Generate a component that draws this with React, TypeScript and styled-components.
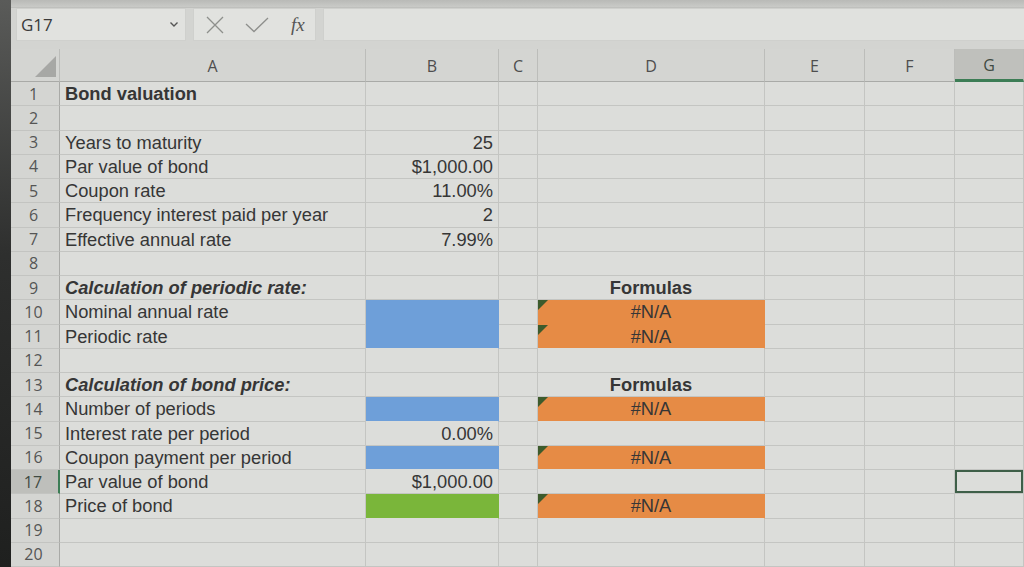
import React from "react";
import styled, { createGlobalStyle } from "styled-components";

const Global = createGlobalStyle`
  html, body { margin: 0; padding: 0; background: #d7d8d5; overflow: hidden; }
  #root { width: 1024px; height: 567px; }
`;

const Screen = styled.div`
  width: 1024px;
  height: 567px;
  display: flex;
  overflow: hidden;
  background: #d9dad7;
`;

const Bezel = styled.div`
  width: 11px;
  flex: none;
  background: linear-gradient(to bottom, #5a5b59 0%, #2e2f2e 45%, #1f201f 100%);
`;

const Main = styled.div`
  flex: 1;
  display: flex;
  flex-direction: column;
  min-width: 0;
`;

const TopStrip = styled.div`
  height: 7px;
  background: linear-gradient(to bottom, #b9bab7, #c9cac7);
  border-bottom: 1px solid #bfc0bd;
`;

const FormulaBar = styled.div`
  height: 33px;
  display: flex;
  gap: 7px;
  padding-left: 5px;
  background: #d3d4d1;
`;

const NameBox = styled.div`
  width: 170px;
  display: flex;
  align-items: center;
  justify-content: space-between;
  padding: 0 6px 0 4px;
  box-sizing: border-box;
  background: #e1e2df;
  border: 1px solid #cfd0cd;
  font-family: "Open Sans", "Noto Sans", sans-serif;
  font-size: 17px;
  color: #3a3a3a;
`;

const FnBox = styled.div`
  width: 123px;
  display: flex;
  align-items: center;
  gap: 20px;
  padding-left: 11px;
  box-sizing: border-box;
  background: #e1e2df;
  border: 1px solid #cfd0cd;
`;

const Fx = styled.span`
  font-family: "Liberation Serif", serif;
  font-style: italic;
  font-size: 19px;
  color: #555;
  margin-left: 2px;
`;

const FormulaInput = styled.div`
  flex: 1;
  background: #e0e1de;
  border: 1px solid #cfd0cd;
  border-right: none;
`;

const Spacer = styled.div`
  height: 8px;
  background: #d3d4d1;
`;

const Sheet = styled.div`
  display: grid;
  grid-template-columns: 49px 306px 133px 39px 227px 100px 90px 1fr;
  grid-template-rows: 33px repeat(20, 24.25px);
  flex: 1;
  background: #dcddda;
`;

const ColHead = styled.div<{ $sel?: boolean }>`
  display: flex;
  align-items: center;
  justify-content: center;
  padding-top: 2px;
  box-sizing: border-box;
  font-family: "Open Sans", "Noto Sans", sans-serif;
  font-size: 16px;
  color: ${(p) => (p.$sel ? "#3f4a42" : "#4e4e4e")};
  background: ${(p) => (p.$sel ? "#bfc0bc" : "#d4d5d2")};
  border-right: 1px solid #bcbdba;
  border-bottom: ${(p) => (p.$sel ? "3px solid #3c7d55" : "1px solid #a9aaa7")};
`;

const Corner = styled.div`
  display: flex;
  align-items: flex-end;
  justify-content: flex-end;
  padding: 0 3px 4px 0;
  background: #d4d5d2;
  border-right: 1px solid #bcbdba;
  border-bottom: 1px solid #a9aaa7;
`;

const RowHead = styled.div<{ $sel?: boolean }>`
  display: flex;
  align-items: center;
  justify-content: center;
  padding-right: 3px;
  box-sizing: border-box;
  font-family: "Open Sans", "Noto Sans", sans-serif;
  font-size: 16px;
  color: ${(p) => (p.$sel ? "#3f4a42" : "#555")};
  background: ${(p) => (p.$sel ? "#bebfbb" : "#d4d5d2")};
  border-right: ${(p) => (p.$sel ? "2px solid #3c7d55" : "1px solid #a9aaa7")};
  border-bottom: 1px solid #c3c4c1;
`;

type Fill = "blue" | "orange" | "green" | undefined;

const fillColor: Record<string, string> = {
  blue: "#6e9fd9",
  orange: "#e68b45",
  green: "#7ab63a",
};

const Cell = styled.div<{
  $align?: "left" | "right" | "center";
  $bold?: boolean;
  $italic?: boolean;
  $fill?: Fill;
  $joinBelow?: boolean;
  $selected?: boolean;
}>`
  position: relative;
  display: flex;
  align-items: center;
  justify-content: ${(p) =>
    p.$align === "right" ? "flex-end" : p.$align === "center" ? "center" : "flex-start"};
  padding: 1px 5px 0 5px;
  box-sizing: border-box;
  white-space: nowrap;
  font-family: "Liberation Sans", Arial, sans-serif;
  font-size: 18.3px;
  font-weight: ${(p) => (p.$bold ? 700 : 400)};
  font-style: ${(p) => (p.$italic ? "italic" : "normal")};
  color: #363636;
  background: ${(p) => (p.$fill ? fillColor[p.$fill] : "#dcddda")};
  border-right: 1px solid ${(p) => (p.$fill ? fillColor[p.$fill] : "#c4c5c2")};
  border-bottom: 1px solid
    ${(p) => (p.$fill && p.$joinBelow ? fillColor[p.$fill] : p.$fill ? "#dcddda" : "#c4c5c2")};
  box-shadow: ${(p) => (p.$selected ? "inset 0 0 0 2px #3e5f48" : "none")};
  overflow: visible;
`;

const ErrMark = styled.span`
  position: absolute;
  left: 0;
  top: 0;
  width: 0;
  height: 0;
  border-top: 10px solid #3d5b2c;
  border-right: 10px solid transparent;
`;

type CellDef = {
  text?: string;
  align?: "left" | "right" | "center";
  bold?: boolean;
  italic?: boolean;
  fill?: Fill;
  joinBelow?: boolean;
  err?: boolean;
};

const rows: Record<number, Record<string, CellDef>> = {
  1: { A: { text: "Bond valuation", bold: true } },
  3: { A: { text: "Years to maturity" }, B: { text: "25", align: "right" } },
  4: { A: { text: "Par value of bond" }, B: { text: "$1,000.00", align: "right" } },
  5: { A: { text: "Coupon rate" }, B: { text: "11.00%", align: "right" } },
  6: { A: { text: "Frequency interest paid per year" }, B: { text: "2", align: "right" } },
  7: { A: { text: "Effective annual rate" }, B: { text: "7.99%", align: "right" } },
  9: {
    A: { text: "Calculation of periodic rate:", bold: true, italic: true },
    D: { text: "Formulas", bold: true, align: "center" },
  },
  10: {
    A: { text: "Nominal annual rate" },
    B: { fill: "blue", joinBelow: true },
    D: { text: "#N/A", align: "center", fill: "orange", joinBelow: true, err: true },
  },
  11: {
    A: { text: "Periodic rate" },
    B: { fill: "blue" },
    D: { text: "#N/A", align: "center", fill: "orange", err: true },
  },
  13: {
    A: { text: "Calculation of bond price:", bold: true, italic: true },
    D: { text: "Formulas", bold: true, align: "center" },
  },
  14: {
    A: { text: "Number of periods" },
    B: { fill: "blue" },
    D: { text: "#N/A", align: "center", fill: "orange", err: true },
  },
  15: { A: { text: "Interest rate per period" }, B: { text: "0.00%", align: "right" } },
  16: {
    A: { text: "Coupon payment per period" },
    B: { fill: "blue" },
    D: { text: "#N/A", align: "center", fill: "orange", err: true },
  },
  17: { A: { text: "Par value of bond" }, B: { text: "$1,000.00", align: "right" } },
  18: {
    A: { text: "Price of bond" },
    B: { fill: "green" },
    D: { text: "#N/A", align: "center", fill: "orange", err: true },
  },
};

const cols = ["A", "B", "C", "D", "E", "F", "G"];

const Chevron = () => (
  <svg width="10" height="7" viewBox="0 0 10 7">
    <path d="M1.5 1.5 L5 5 L8.5 1.5" fill="none" stroke="#555" strokeWidth="1.4" />
  </svg>
);

const CancelIcon = () => (
  <svg width="20" height="20" viewBox="0 0 20 20">
    <path d="M2 2 L18 18 M18 2 L2 18" stroke="#8e8f8c" strokeWidth="1.3" fill="none" />
  </svg>
);

const CheckIcon = () => (
  <svg width="24" height="16" viewBox="0 0 24 16">
    <path d="M1 7 L9 14.5 L23 1" stroke="#8e8f8c" strokeWidth="1.3" fill="none" />
  </svg>
);

const CornerTri = () => (
  <svg width="21" height="21" viewBox="0 0 21 21">
    <path d="M21 0 L21 21 L0 21 Z" fill="#a7a8a5" />
  </svg>
);

export default function App() {
  return (
    <>
      <Global />
      <Screen>
        <Bezel />
        <Main>
          <TopStrip />
          <FormulaBar>
            <NameBox>
              <span>G17</span>
              <Chevron />
            </NameBox>
            <FnBox>
              <CancelIcon />
              <CheckIcon />
              <Fx>fx</Fx>
            </FnBox>
            <FormulaInput />
          </FormulaBar>
          <Spacer />
          <Sheet>
            <Corner>
              <CornerTri />
            </Corner>
            {cols.map((c) => (
              <ColHead key={c} $sel={c === "G"}>
                {c}
              </ColHead>
            ))}
            {Array.from({ length: 20 }, (_, i) => i + 1).map((r) => (
              <React.Fragment key={r}>
                <RowHead $sel={r === 17}>{r}</RowHead>
                {cols.map((c) => {
                  const d = rows[r]?.[c] ?? {};
                  return (
                    <Cell
                      key={c}
                      $align={d.align}
                      $bold={d.bold}
                      $italic={d.italic}
                      $fill={d.fill}
                      $joinBelow={d.joinBelow}
                      $selected={r === 17 && c === "G"}
                    >
                      {d.err && <ErrMark />}
                      {d.text}
                    </Cell>
                  );
                })}
              </React.Fragment>
            ))}
          </Sheet>
        </Main>
      </Screen>
    </>
  );
}
